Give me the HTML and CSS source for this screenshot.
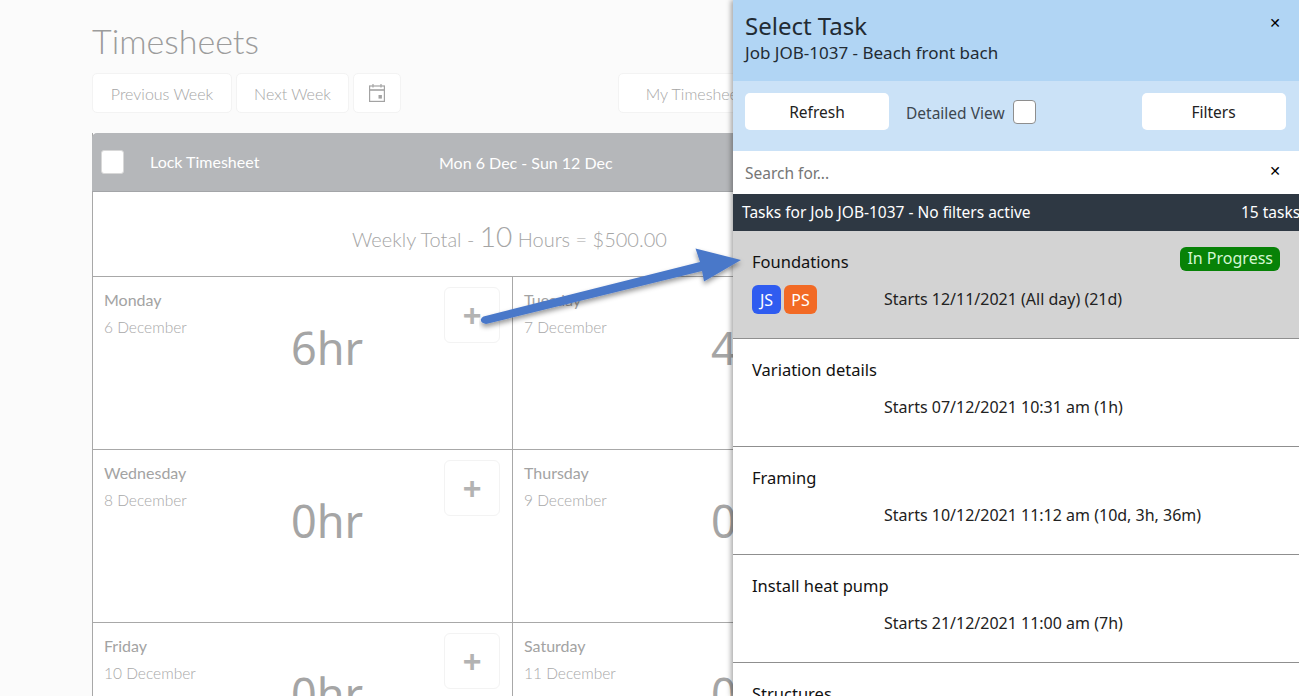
FILE: index.html
```html
<!DOCTYPE html>
<html lang="en">
<head>
    <meta charset="UTF-8">
    <title>Timesheets</title>
    <link rel="stylesheet" href="styles.css">
</head>
<body>

    <div class="page">
        <h1>Timesheets</h1>

        <div class="toolbar">
            <button class="tool-btn prev-btn">Previous Week</button>
            <button class="tool-btn next-btn">Next Week</button>
            <button class="tool-btn cal-btn">
                <svg width="18" height="20" viewBox="0 0 18 20" fill="none" stroke="#a3a3a3" stroke-width="1.2">
                    <rect x="1.6" y="3" width="14.8" height="15.4"/>
                    <path d="M1.6 7h14.8" stroke-width="1.6"/>
                    <path d="M5 1v3.4M13 1v3.4"/>
                    <rect x="10.5" y="12" width="3.4" height="3.6" fill="#a3a3a3" stroke="none"/>
                </svg>
            </button>
            <button class="tool-btn mine-btn">My Timesheets</button>
        </div>

        <div class="sheet">
            <div class="sheet-head">
                <span class="lock-box"></span>
                <span class="lock-label">Lock Timesheet</span>
                <span class="week-range">Mon 6 Dec - Sun 12 Dec</span>
            </div>
            <div class="weekly-total">
                <span class="weekly-text">Weekly Total - <span class="weekly-num">10</span> Hours = $500.00</span>
            </div>
            <div class="days">
                <div class="day">
                    <div class="day-name">Monday</div>
                    <div class="day-date">6 December</div>
                    <div class="day-hours">6hr</div>
                    <button class="add-btn">+</button>
                </div>
                <div class="day">
                    <div class="day-name">Tuesday</div>
                    <div class="day-date">7 December</div>
                    <div class="day-hours">4hr</div>
                    <button class="add-btn">+</button>
                </div>
                <div class="day">
                    <div class="day-name">Wednesday</div>
                    <div class="day-date">8 December</div>
                    <div class="day-hours">0hr</div>
                    <button class="add-btn">+</button>
                </div>
                <div class="day">
                    <div class="day-name">Thursday</div>
                    <div class="day-date">9 December</div>
                    <div class="day-hours">0hr</div>
                    <button class="add-btn">+</button>
                </div>
                <div class="day">
                    <div class="day-name">Friday</div>
                    <div class="day-date">10 December</div>
                    <div class="day-hours">0hr</div>
                    <button class="add-btn">+</button>
                </div>
                <div class="day">
                    <div class="day-name">Saturday</div>
                    <div class="day-date">11 December</div>
                    <div class="day-hours">0hr</div>
                    <button class="add-btn">+</button>
                </div>
            </div>
        </div>
    </div>

    <!-- Slide-out panel -->
    <div class="panel">
        <div class="panel-head">
            <div class="panel-titles">
                <div class="panel-title">Select Task</div>
                <div class="panel-sub">Job JOB-1037 - Beach front bach</div>
            </div>
            <span class="close-x head-x">&#10005;</span>
        </div>
        <div class="panel-tools">
            <button class="panel-btn">Refresh</button>
            <span class="detail-label">Detailed View</span>
            <span class="detail-box"></span>
            <button class="panel-btn filters-btn">Filters</button>
        </div>
        <div class="search-row">
            <span class="search-text">Search for...</span>
            <span class="close-x search-x">&#10005;</span>
        </div>
        <div class="tasks-bar">
            <span>Tasks for Job JOB-1037 - No filters active</span>
            <span class="tasks-count">15 tasks</span>
        </div>

        <div class="task task-active">
            <div class="task-top">
                <span class="task-name">Foundations</span>
                <span class="status">In Progress</span>
            </div>
            <div class="task-info">
                <div class="people">
                    <span class="person person-js">JS</span>
                    <span class="person person-ps">PS</span>
                </div>
                <span>Starts 12/11/2021 (All day) (21d)</span>
            </div>
        </div>
        <div class="task">
            <div class="task-top"><span class="task-name">Variation details</span></div>
            <div class="task-info"><div class="people"></div><span>Starts 07/12/2021 10:31 am (1h)</span></div>
        </div>
        <div class="task">
            <div class="task-top"><span class="task-name">Framing</span></div>
            <div class="task-info"><div class="people"></div><span>Starts 10/12/2021 11:12 am (10d, 3h, 36m)</span></div>
        </div>
        <div class="task">
            <div class="task-top"><span class="task-name">Install heat pump</span></div>
            <div class="task-info"><div class="people"></div><span>Starts 21/12/2021 11:00 am (7h)</span></div>
        </div>
        <div class="task">
            <div class="task-top"><span class="task-name">Structures</span></div>
        </div>
    </div>

    <!-- Annotation arrow -->
    <svg class="arrow" width="280" height="100" viewBox="0 0 280 100">
        <defs>
            <filter id="arrowShadow" x="-10%" y="-30%" width="120%" height="170%">
                <feDropShadow dx="0" dy="3" stdDeviation="2.5" flood-color="#000" flood-opacity="0.4"/>
            </filter>
        </defs>
        <path d="M4.5 76.5 L221 22 L216.500 8.500 L262 20 L225 41.500 L223 31 L7 84 Q1.500 83 1.800 79.500 Q2.500 77.500 4.500 76.500 Z" fill="#4a78c9" filter="url(#arrowShadow)"/>
    </svg>

</body>
</html>
```

FILE: styles.css
```css
* {
    box-sizing: border-box;
}
html, body {
    height: 100%;
}
body {
    margin: 0;
    height: 696px;
    overflow: hidden;
    position: relative;
    background-color: #fbfbfb;
    font-family: "Noto Sans", sans-serif;
}
button {
    font-family: inherit;
}

/* Timesheet page */
.page {
    padding: 21px 0 0 92px;
    width: 1299px;
}
h1 {
    margin: 0;
    height: 52px;
    font-size: 34px;
    line-height: 40px;
    font-weight: 300;
    font-family: Lato, sans-serif;
    color: #9c9c9c;
}
.toolbar {
    display: flex;
    gap: 4px;
    height: 60px;
}
.tool-btn {
    height: 40px;
    background-color: #fff;
    border: 1px solid #f3f3f3;
    border-radius: 5px;
    color: #a6a6a6;
    font-size: 16px;
    font-family: Lato, sans-serif;
    font-weight: 300;
    padding: 0;
}
.prev-btn {
    width: 140px;
}
.next-btn {
    width: 113px;
}
.cal-btn {
    width: 48px;
    display: flex;
    align-items: center;
    justify-content: center;
}
.mine-btn {
    width: 160px;
    margin-left: 213px;
}
.sheet {
    width: 840px;
    border-left: 1px solid #a8a8a8;
    background-color: #fff;
}
.sheet-head {
    height: 59px;
    margin-left: -1px;
    background-color: #b5b7ba;
    border-radius: 5px 5px 0 0;
    border-bottom: 1px solid #a3a5a8;
    display: flex;
    align-items: center;
    color: #fff;
    font-family: Lato, sans-serif;
    font-size: 16px;
    padding-left: 9px;
}
.lock-box {
    width: 23px;
    height: 24px;
    background-color: #fff;
    border-radius: 3px;
    border: 1px solid #d8d8d8;
}
.lock-label {
    margin-left: 26px;
    margin-bottom: 2px;
    width: 289px;
}
.week-range {
    width: 300px;
}
.weekly-total {
    height: 85px;
    border-bottom: 1px solid #a8a8a8;
    padding: 26px 0 0 259px;
    color: #a5a5a5;
    font-family: Lato, sans-serif;
    font-weight: 300;
    font-size: 20px;
    line-height: 36px;
}
.weekly-num {
    font-size: 28px;
}
.days {
    display: grid;
    grid-template-columns: 420px 420px;
    grid-auto-rows: 173px;
}
.day {
    position: relative;
    border-bottom: 1px solid #a8a8a8;
    border-right: 1px solid #a8a8a8;
    padding: 12px 0 0 11px;
    font-family: Lato, sans-serif;
}
.day-name {
    font-size: 16px;
    line-height: 22px;
    color: #a3a3a3;
}
.day-date {
    margin-top: 5px;
    font-size: 15.500px;
    line-height: 22px;
    font-weight: 300;
    color: #a8a8a8;
}
.day-hours {
    position: absolute;
    left: 198px;
    top: 41px;
    font-family: "Noto Sans", sans-serif;
    font-size: 45px;
    line-height: 60px;
    color: #a5a5a5;
}
.add-btn {
    position: absolute;
    left: 351px;
    top: 10px;
    width: 56px;
    height: 56px;
    background-color: #fff;
    border: 1px solid #f3f3f3;
    border-radius: 6px;
    color: #b3b3b3;
    font-size: 32px;
    line-height: 1;
    font-weight: 700;
    font-family: "Liberation Sans", sans-serif;
    padding: 0;
}

/* Task panel */
.panel {
    position: absolute;
    top: 0;
    left: 733px;
    width: 570px;
    height: 696px;
    overflow: hidden;
    background-color: #fff;
    box-shadow: -2px 0 5px rgba(0, 0, 0, 0.35);
    color: #1c1c1c;
    font-family: "Noto Sans", sans-serif;
}
.panel-head {
    height: 81px;
    background-color: #b1d5f4;
    padding: 11px 0 0 12px;
    display: flex;
    justify-content: space-between;
}
.panel-title {
    font-size: 24px;
    line-height: 30px;
    color: #222b33;
}
.panel-sub {
    font-size: 17px;
    line-height: 24px;
    color: #222b33;
}
.close-x {
    font-family: "DejaVu Sans", sans-serif;
    font-weight: 700;
    color: #000;
    font-size: 14px;
}
.head-x {
    margin: 4px 22px 0 0;
}
.panel-tools {
    height: 70px;
    background-color: #cbe2f7;
    padding: 12px 10px 0 12px;
    display: flex;
    align-items: flex-start;
}
.panel-btn {
    width: 144px;
    height: 37px;
    background-color: #fff;
    border: none;
    border-radius: 5px;
    color: #222;
    font-size: 15.500px;
}
.detail-label {
    margin-left: 17px;
    font-size: 15.500px;
    line-height: 40px;
    color: #3d4750;
}
.detail-box {
    width: 23px;
    height: 24px;
    margin: 7px 0 0 8px;
    background-color: #fff;
    border: 1px solid #8e8e8e;
    border-radius: 4px;
}
.filters-btn {
    margin-left: 106px;
}
.search-row {
    height: 43px;
    padding: 10px 22px 0 12px;
    display: flex;
    justify-content: space-between;
}
.search-text {
    font-size: 15.500px;
    line-height: 24px;
    color: #767676;
}
.search-x {
    margin-top: 2px;
    margin-right: 0;
}
.tasks-bar {
    height: 37px;
    background-color: #2e3843;
    color: #fff;
    font-size: 15.500px;
    line-height: 37px;
    padding-left: 9px;
    display: flex;
    justify-content: space-between;
}
.tasks-count {
    width: 62px;
    white-space: nowrap;
}
.task {
    height: 108px;
    border-bottom: 1px solid #8f8f8f;
    padding: 19px 19px 0 19px;
    font-size: 16px;
    color: #222;
}
.task-active {
    background-color: #d3d3d3;
}
.task-top {
    display: flex;
    justify-content: space-between;
    height: 24px;
    line-height: 24px;
}
.task-name {
    font-size: 16.500px;
    color: #111;
}
.status {
    background-color: #078207;
    color: #d4f7d4;
    border-radius: 6px;
    height: 24px;
    padding: 0 7px;
    font-size: 16px;
    line-height: 22px;
    margin: -3px 0 0 0;
    margin-right: 4px;
}
.task-info {
    display: flex;
    align-items: center;
    height: 30px;
    margin-top: 10px;
}
.people {
    display: flex;
    gap: 3px;
    width: 132px;
}
.person {
    width: 33px;
    height: 29px;
    border-radius: 6px;
    color: #fff;
    text-align: center;
    font-size: 16px;
    line-height: 30px;
}
.person-js {
    width: 29px;
    background-color: #2f5cf0;
}
.person-ps {
    background-color: #f26a25;
}

/* Annotation */
.arrow {
    position: absolute;
    left: 479px;
    top: 240px;
}
```
